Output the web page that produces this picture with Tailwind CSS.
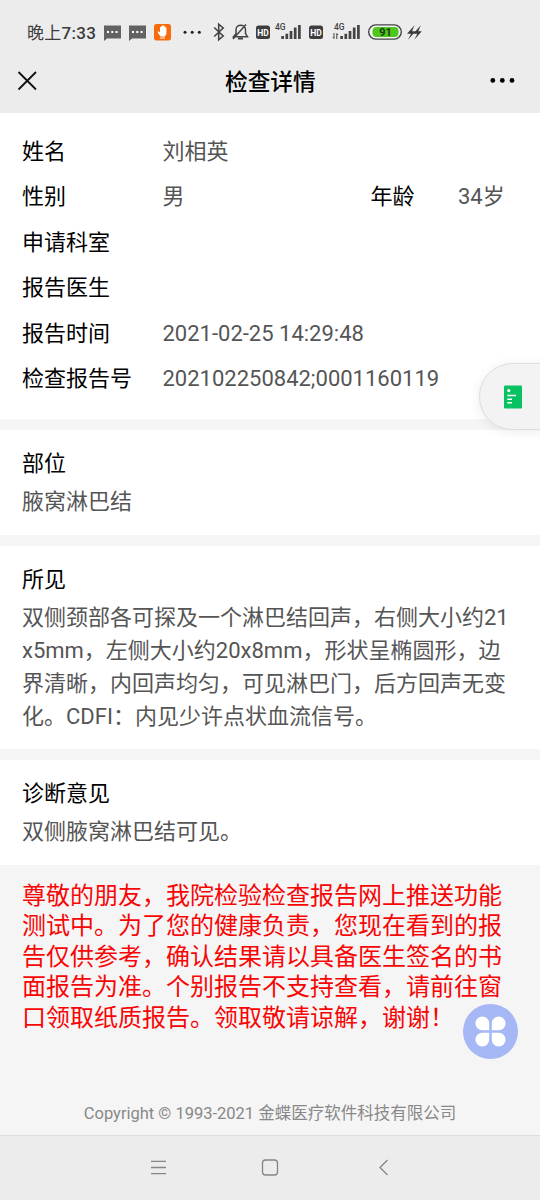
<!DOCTYPE html>
<html lang="zh-CN">
<head>
<meta charset="utf-8">
<meta name="viewport" content="width=device-width">
<title>检查详情</title>
<script src="https://cdn.jsdelivr.net/npm/@tailwindcss/browser@4"></script>
</head>
<body class="bg-[#f5f5f5]">
<div class="relative flex h-[1200px] w-[540px] flex-col overflow-hidden bg-[#f5f5f5] font-[Roboto,'Noto_Sans_CJK_SC',sans-serif] text-[22px] text-[#555]">
  <header class="h-[113px] shrink-0 bg-[#ececec] text-[#3c3c3c]">
    <div class="flex h-16 items-center pl-[27px]">
      <span class="w-[77px] whitespace-nowrap pt-px text-[17px] leading-6 tracking-[0.3px]">晚上<span class="font-medium">7:33</span></span>
      <svg class="h-16 w-[330px] shrink-0" viewBox="104 0 330 64" fill="none">
        <path d="M104 25.500h17v13h-14l-3 2.500zM129 25.500h17v13h-14l-3 2.500z" fill="#626262"/>
        <path d="M107 32h2m2.300 0h2m2.300 0h2M132 32h2m2.300 0h2m2.300 0h2" stroke="#fff" stroke-width="2"/>
        <rect x="154" y="24" width="17" height="16.500" rx="2.500" fill="#f76b0c"/>
        <path d="M160.500 36.500l-3-4.500 1-.8 1.500 1.300V27h1.300v-1.300h1.300V25.500h1.300v.8h1.300v1.200h1.200v6.500l-1.500 2.500z" fill="#fff"/>
        <path d="M160 38h5" stroke="#fff"/>
        <g fill="#222"><circle cx="185" cy="32.200" r="1.500"/><circle cx="192.200" cy="32.200" r="1.500"/><circle cx="199.300" cy="32.200" r="1.500"/></g>
        <path d="M214.200 27.500l9 8.500-4.500 3.800v-15.600l4.500 3.800-9 8.500" stroke="#444" stroke-width="1.600"/>
        <path d="M233.500 36.700h14l-2-3v-4c0-6-9.500-6-9.500 0v4zM233 39l13-14.500" stroke="#444" stroke-width="1.500"/>
        <path d="M238 38.500h5" stroke="#444" stroke-width="2"/>
        <rect x="256" y="25.500" width="14" height="13.500" rx="2.500" fill="#3d3d3d"/>
        <rect x="309" y="25.500" width="14" height="13.500" rx="2.500" fill="#3d3d3d"/>
        <g class="font-[Roboto]" text-anchor="middle">
          <text x="263" y="35.500" font-size="8.500" font-weight="700" fill="#fff">HD</text>
          <text x="316" y="35.500" font-size="8.500" font-weight="700" fill="#fff">HD</text>
          <text x="280.300" y="29.500" font-size="8.500" font-weight="500" fill="#444">4G</text>
          <text x="339.300" y="29.500" font-size="8.500" font-weight="500" fill="#444">4G</text>
        </g>
        <path d="M282.600 39v-3m4.200 3v-5.200m4.200 5.200v-8m4.200 8V27.500m4.200 11.500V25M341.600 39v-3m4.200 3v-5.200m4.200 5.200v-8m4.200 8V27.500m4.200 11.500V25" stroke="#444" stroke-width="2.700"/>
        <path d="M334 33v5.500l-1.300-1.500M336.800 39v-5.500l1.300 1.500" stroke="#444"/>
        <rect x="368.700" y="24.900" width="32.600" height="14.200" rx="7.100" fill="#f4f4f4" stroke="#444" stroke-width="1.400"/>
        <rect x="372.500" y="27" width="26" height="10" rx="4" fill="#4ec71c"/>
        <text class="font-[Roboto]" x="385.500" y="36.100" text-anchor="middle" font-size="11" font-weight="700" fill="#1b3b10">91</text>
        <path d="M414.500 25.300l-7.500 8.500h4l-3 6 7.500-8.500h-3.500zM420.800 25.300l-7.500 8.500h4l-3 6 7.500-8.500h-3.500z" fill="#3b3b3b"/>
      </svg>
    </div>
    <div class="flex h-[33px] items-center pl-[17px] pr-[25px] text-black">
      <svg class="h-5 w-[31px]" viewBox="0 0 31 20" fill="none"><path d="M1.500 1l17.500 17.500M19 1L1.500 18.500" stroke="#111" stroke-width="1.800"/></svg>
      <h1 class="ml-[177px] w-[92px] whitespace-nowrap pt-1 text-[22.700px] font-medium leading-8">检查详情</h1>
      <svg class="ml-auto h-5 w-[31px]" viewBox="0 0 31 20"><circle cx="8.800" cy="9.400" r="2.400"/><circle cx="18.300" cy="9.400" r="2.400"/><circle cx="28" cy="9.400" r="2.400"/></svg>
    </div>
  </header>
  <main class="flex flex-col gap-[11px]">
    <dl class="flex h-[306px] flex-col bg-white px-[22px] pt-4 leading-[45.400px] [&>div]:flex [&>div]:h-[45.400px] [&_dt]:w-[140.500px] [&_dt]:shrink-0 [&_dt]:text-black">
      <div><dt>姓名</dt><dd>刘相英</dd></div>
      <div><dt>性别</dt><dd class="w-[208px]">男</dd><dt class="!w-[87.500px]">年龄</dt><dd>34岁</dd></div>
      <div><dt>申请科室</dt></div>
      <div><dt>报告医生</dt></div>
      <div><dt>报告时间</dt><dd>2021-02-25 14:29:48</dd></div>
      <div><dt>检查报告号</dt><dd>202102250842;0001160119</dd></div>
    </dl>
    <section class="h-[105px] bg-white px-[22px] pt-[13px] leading-[33px]">
      <h2 class="h-[39px] leading-[41px] text-black">部位</h2>
      <p class="pt-[3px]">腋窝淋巴结</p>
    </section>
    <section class="h-[203px] bg-white px-[22px] pt-[13px] leading-[33px]">
      <h2 class="h-[39px] leading-[41px] text-black">所见</h2>
      <p class="whitespace-nowrap pt-[3px]">双侧颈部各可探及一个淋巴结回声，右侧大小约21<br>x5mm，左侧大小约20x8mm，形状呈椭圆形，边<br>界清晰，内回声均匀，可见淋巴门，后方回声无变<br>化。CDFI：内见少许点状血流信号。</p>
    </section>
    <section class="h-[105px] bg-white px-[22px] pt-[13px] leading-[33px]">
      <h2 class="h-[39px] leading-[41px] text-black">诊断意见</h2>
      <p class="pt-[3px]">双侧腋窝淋巴结可见。</p>
    </section>
  </main>
  <p class="whitespace-nowrap px-[22px] pt-[15.500px] text-[24px] leading-[30.500px] text-[#f80505]">尊敬的朋友，我院检验检查报告网上推送功能<br>测试中。为了您的健康负责，您现在看到的报<br>告仅供参考，确认结果请以具备医生签名的书<br>面报告为准。个别报告不支持查看，请前往窗<br>口领取纸质报告。领取敬请谅解，谢谢！</p>
  <footer class="mt-auto">
    <p class="h-[33px] text-center text-[16.500px] leading-6 text-[#888]">Copyright © 1993-2021 金蝶医疗软件科技有限公司</p>
    <nav class="h-[65px] border-t border-[#dedede] bg-[#ececec]">
      <svg class="h-16 w-[540px]" viewBox="0 1136 540 64" fill="none" stroke="#858585" stroke-width="1.300"><path d="M151 1161.300h15M151 1167.500h15M151 1173.600h15M387.500 1160l-7.500 7.500 7.500 7.500"/><rect x="262.500" y="1160" width="15" height="15" rx="3"/></svg>
    </nav>
  </footer>
  <div class="absolute left-[479px] top-[363px] h-[67px] w-[80px] rounded-l-full border border-[#dedede] bg-[#f3f3f3] shadow-[0_2px_12px_rgba(0,0,0,0.08)]">
    <svg class="ml-[24px] mt-[21px] h-6 w-[19px]" viewBox="0 0 19 24" fill="none"><rect y="0.500" width="18" height="23" rx="1" fill="#08c160"/><circle cx="4.800" cy="5.600" r="1.600" fill="#fff"/><path d="M3.300 10.500H12M3.300 14.200H8M3.300 17.800H8" stroke="#fff" stroke-width="1.400"/></svg>
  </div>
  <svg class="absolute left-[463px] top-[1004px] h-[55px] w-[55px]" viewBox="0 0 55 55"><circle cx="27.500" cy="27.500" r="27.500" fill="#a5b7f5"/><path fill="#fff" d="M26.200 26.200V19.300a6.900 6.900 0 1 0-6.900 6.900zM28.800 26.200V19.300a6.900 6.900 0 1 1 6.900 6.900zM26.200 28.800V35.700a6.900 6.900 0 1 1-6.900-6.900zM28.800 28.800V35.700a6.900 6.900 0 1 0 6.900-6.900z"/></svg>
</div>
</body>
</html>
